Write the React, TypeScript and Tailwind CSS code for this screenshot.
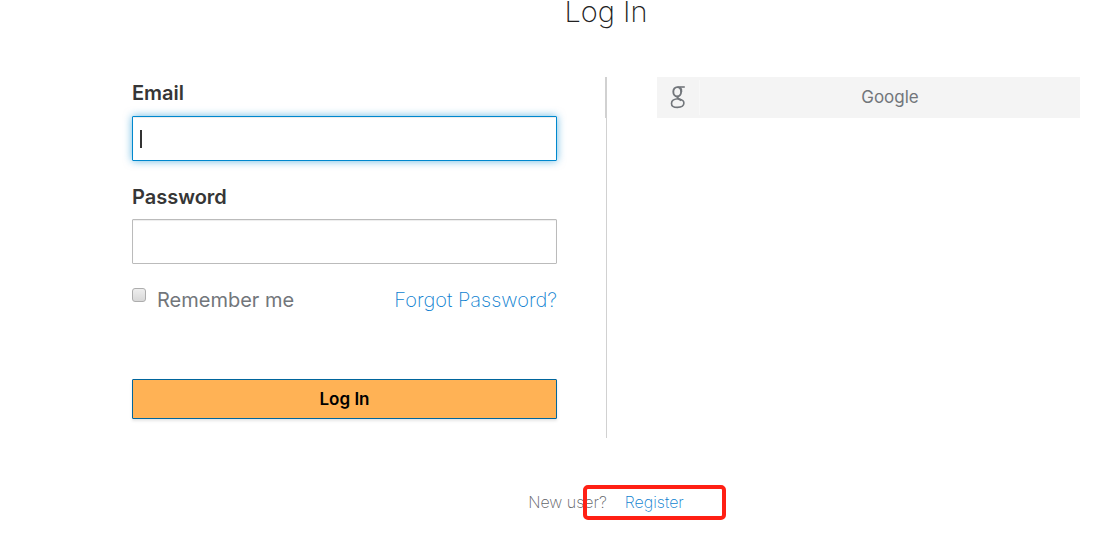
import React from "react";

function GoogleMark() {
  return (
    <svg
      viewBox="0 0 16 24"
      className="mb-px h-6 w-4"
      fill="none"
      stroke="#72767b"
      aria-hidden="true"
    >
      <ellipse cx="7.2" cy="6.8" rx="3.9" ry="4.7" strokeWidth="1.9" />
      <path d="M7.5 2h7.3" strokeWidth="1.6" />
      <path d="M10 2.4c1.3 1 1.8 2.4 1.5 4.4" strokeWidth="1.6" />
      <path d="M8.4 11.2c-1.6 1.1-1 1.9 .6 2.9l2.4 1.3" strokeWidth="2" />
      <path
        d="M8.6 13.8C4.2 13.9 1.5 15.7 1.5 18.4c0 2.6 2.3 4 5.9 4 4 0 6.5-1.7 6.5-4.3 0-2.2-1.9-3.6-4.9-4.1"
        strokeWidth="1.6"
      />
    </svg>
  );
}

function LoginForm() {
  return (
    <form onSubmit={(e) => e.preventDefault()}>
      <label htmlFor="email" className="block pt-1 text-[20px] leading-6 font-semibold text-[#363636]">
        Email
      </label>
      <div className="relative mt-[11px]">
        <input
          id="email"
          type="email"
          className="block h-[45px] w-full rounded-[1px] border border-[#0088ce] bg-white px-2 text-lg text-[#363636] caret-transparent shadow-[inset_0_1px_1px_rgba(3,3,3,0.075),0_0_8px_rgba(0,136,206,0.6)] outline-none"
        />
        <span className="absolute top-[14px] left-2 h-[18px] w-[2px] bg-[#333]" aria-hidden="true" />
      </div>
      <label htmlFor="password" className="mt-6 block text-[20px] leading-6 font-semibold text-[#363636]">
        Password
      </label>
      <input
        id="password"
        type="password"
        className="mt-[10px] block h-[45px] w-full rounded-[1px] border border-[#bbb] bg-white px-2 text-lg text-[#363636] shadow-[inset_0_1px_1px_rgba(3,3,3,0.075)] outline-none"
      />
      <div className="mt-6 flex items-start justify-between text-[20px] leading-6">
        <label className="flex items-start gap-[11px] text-[#72767b]">
          <input
            type="checkbox"
            className="size-[14px] appearance-none rounded-[3px] border border-[#adadad] bg-linear-to-b from-[#eee] to-[#d8d8d8]"
          />
          <span>Remember me</span>
        </label>
        <a href="#forgot" className="font-extralight text-[#0d7fd0]">
          Forgot Password?
        </a>
      </div>
      <button
        type="submit"
        className="mt-[67px] block h-10 w-full rounded-[1px] border border-[#00659c] bg-[#ffb255] text-[17px] leading-6 font-semibold text-black shadow-[0_2px_3px_rgba(3,3,3,0.1)]"
      >
        Log In
      </button>
    </form>
  );
}

export default function App() {
  return (
    <main className="bg-white pr-[14px] pb-4 pl-[132px] font-['Inter',sans-serif]">
      <h1 className="text-center text-[29px] leading-6 font-extralight text-[#222]">Log In</h1>
      <section className="mt-[53px] grid grid-cols-[1fr_2px_1fr]">
        <div className="min-w-0 pr-12 pb-[19px]">
          <LoginForm />
        </div>
        <div className="flex flex-col items-end" aria-hidden="true">
          <div className="h-[41px] w-[2px] bg-[#d1d1d1]" />
          <div className="w-px flex-1 bg-[#d1d1d1]" />
        </div>
        <div className="min-w-0 pl-[50px]">
          <a
            href="#google"
            className="flex h-[41px] items-center bg-[#f4f4f4] text-[17px] text-[#72767b]"
          >
            <span className="flex h-[35px] w-[43px] items-center justify-center border-r border-[#f8f8f8]">
              <GoogleMark />
            </span>
            <span className="flex-1 text-center">Google</span>
          </a>
        </div>
      </section>
      <footer className="mt-[52px] flex justify-center text-[16px] leading-6 font-extralight text-[#5f6368]">
        <p className="relative flex gap-[18px]">
          <span>New user?</span>
          <a href="#register" className="text-[#0d7fd0]">
            Register
          </a>
          <span
            className="pointer-events-none absolute -top-[5px] -right-[42px] h-[35px] w-[143px] rounded-[5px] border-4 border-[#ff2014]"
            aria-hidden="true"
          />
        </p>
      </footer>
    </main>
  );
}
